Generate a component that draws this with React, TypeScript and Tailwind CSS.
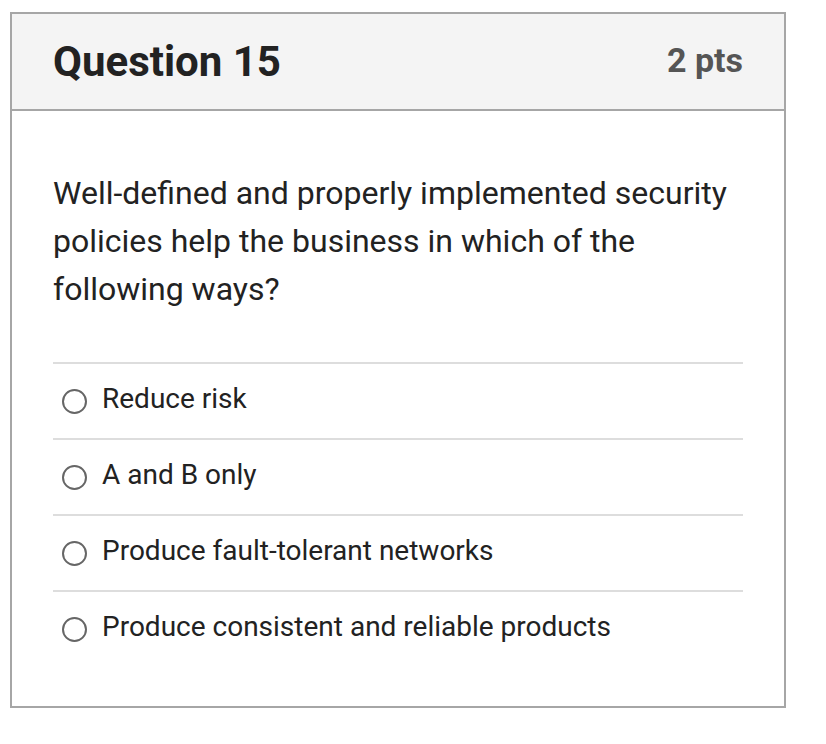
const options = [
  'Reduce risk',
  'A and B only',
  'Produce fault-tolerant networks',
  'Produce consistent and reliable products',
];

export default function App() {
  return (
    <div className="min-h-screen bg-white pl-[10px] pt-[12px]" style={{ fontFamily: 'Roboto, "Liberation Sans", sans-serif' }}>
      <div className="w-[776px] border-2 border-[#a6a6a6]">
        <div className="flex h-[97px] items-center justify-between border-b-2 border-[#a6a6a6] bg-[#f4f4f4] px-[41px]">
          <h2 className="text-[42px] font-bold leading-none text-[#222]">Question 15</h2>
          <span className="pb-[4px] text-[34px] font-bold leading-none text-[#555]">2 pts</span>
        </div>
        <div className="px-[41px] pt-[58px] pb-[40px]">
          <p className="text-[32px] leading-[48px] text-[#222]">
            Well-defined and properly implemented security policies help the business in which of the following ways?
          </p>
          <div className="mt-[49px]">
            {options.map((o) => (
              <label key={o} className="flex h-[76px] items-center border-t-2 border-[#dddddd] pl-[9px]">
                <span className="h-[25px] w-[25px] rounded-full border-[2.5px] border-[#666]" />
                <span className="ml-[15px] pb-[5px] text-[28px] text-[#222]">{o}</span>
              </label>
            ))}
          </div>
        </div>
      </div>
    </div>
  );
}
